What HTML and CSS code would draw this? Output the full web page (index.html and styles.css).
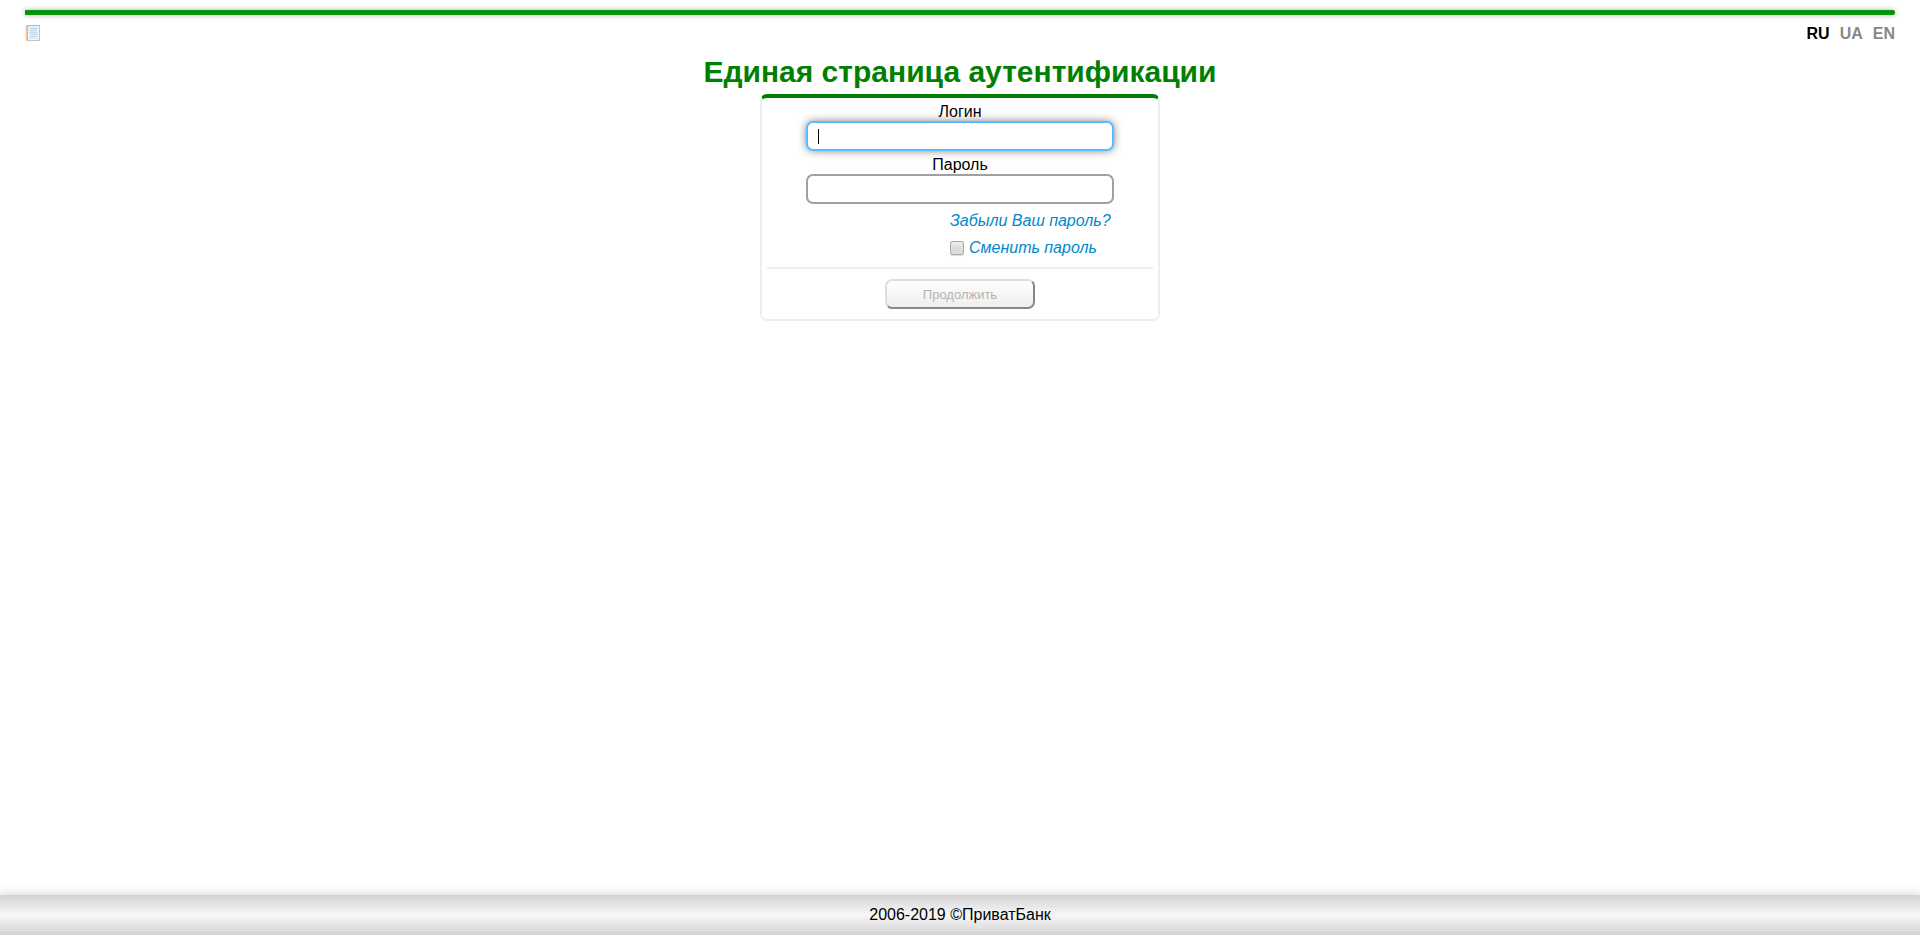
FILE: index.html
```html
<!DOCTYPE html>
<html lang="ru">
<head>
<meta charset="utf-8">
<title>Единая страница аутентификации</title>
<link rel="stylesheet" href="styles.css">
</head>
<body>
<header class="header">
  <div class="stripe"></div>
  <div class="toolbar">
    <a class="manual" href="#" aria-label="Инструкция">
      <svg width="16" height="16" viewBox="0 0 16 16" aria-hidden="true">
        <rect x="1" y="0" width="14" height="16" rx="1" fill="#dfb9a0"/>
        <rect x="2" y="0" width="13" height="1" fill="#d8ae8c"/>
        <rect x="2" y="15" width="13" height="1" fill="#d5bfb4"/>
        <rect x="1" y="1" width="2" height="14" fill="#e9b08f"/>
        <path d="M0 2.500h2M0 4.500h2M0 6.500h2M0 8.500h2M0 10.500h2M0 12.500h2" stroke="#f5d8c8"/>
        <rect x="3" y="1" width="11" height="14" fill="#eef5fb"/>
        <rect x="4" y="2" width="9" height="12" fill="#dcecf8"/>
        <path d="M5 3.500h7M5 5.500h6M5 7.500h7M6 9.500h6M5 11.500h7" stroke="#c5d8ea"/>
      </svg>
    </a>
    <nav class="languages" aria-label="Язык">
      <a class="language language-active" href="#">RU</a>
      <a class="language" href="#">UA</a>
      <a class="language" href="#">EN</a>
    </nav>
  </div>
</header>
<main class="main">
  <h1 class="title">Единая страница аутентификации</h1>
  <form class="card">
    <label class="label" for="login">Логин</label>
    <input class="field field-current" id="login" type="text" autocomplete="off">
    <label class="label" for="password">Пароль</label>
    <input class="field" id="password" type="password">
    <div class="options">
      <a class="option" href="#">Забыли Ваш пароль?</a>
      <label class="option"><input class="check" type="checkbox">Сменить пароль</label>
    </div>
    <hr class="divider">
    <button class="submit" type="submit" disabled>Продолжить</button>
  </form>
</main>
<footer class="footer">2006-2019 ©ПриватБанк</footer>
</body>
</html>
```
FILE: styles.css
```css
* {
  box-sizing: border-box;
}

body {
  margin: 0;
  min-height: 100vh;
  display: flex;
  flex-direction: column;
  background: #fff;
  color: #000;
  font: 16px/18px "Liberation Sans", Arial, sans-serif;
}

.header {
  padding: 10px 25px 0;
}

.stripe {
  height: 5px;
  border-radius: 0 2px 2px 0;
  background: linear-gradient(#0a9b14, #009100 50%, #0a9b14);
  box-shadow: 0 0 5px #aaa;
}

.toolbar {
  display: flex;
  justify-content: space-between;
  padding-top: 10px;
}

.manual svg {
  display: block;
}

.languages {
  display: flex;
  gap: 10px;
}

.language {
  color: #888;
  font-weight: bold;
  text-decoration: none;
}

.language-active {
  color: #000;
}

.main {
  flex: 1;
  display: flex;
  flex-direction: column;
  align-items: center;
  padding-top: 11px;
}

.title {
  margin: 0 0 4px;
  color: #008000;
  font-size: 30px;
  line-height: 36px;
}

.card {
  width: 400px;
  display: flex;
  flex-direction: column;
  align-items: center;
  padding: 0 5px 10px;
  border: 2px solid #eee;
  border-top: 4px solid #008000;
  border-radius: 7px;
}

.label {
  padding-top: 4px;
  line-height: 19px;
}

.field {
  width: 308px;
  height: 30px;
  padding: 0 10px;
  border: 2px solid #a0a0a0;
  border-radius: 7px;
  outline: 0;
  background: #fff;
  font: inherit;
}

/* The first field looks active, with a resting caret */
.field-current {
  border-color: #5cbcff;
  background: linear-gradient(#000, #000) 10px 6px / 1px 15px no-repeat #fff;
  box-shadow: 0 0 8px #888;
}

.options {
  width: 308px;
  display: flex;
  flex-direction: column;
  align-items: flex-start;
  padding: 3px 0 6px 144px;
}

.option {
  display: flex;
  align-items: center;
  color: #08c;
  font-style: italic;
  line-height: 27px;
  text-decoration: none;
  white-space: nowrap;
}

.check {
  appearance: none;
  width: 14px;
  height: 14px;
  margin: 0 5px 0 0;
  border: 1px solid #aaa;
  border-radius: 2px;
  background: linear-gradient(#eee, #dcdcdc 50%);
  box-shadow: 0 1px 1px #ddd;
}

.check:checked {
  background: #08c;
}

.divider {
  width: 100%;
  height: 2px;
  margin: 0 0 10px;
  border: 0;
  background: #eee;
}

.submit {
  width: 150px;
  height: 30px;
  padding: 0;
  border: 2px solid;
  border-color: #ddd #888 #888 #ddd;
  border-radius: 7px;
  background: linear-gradient(#fff, #eee);
  color: #b2b2b2;
  font: 13px/15px "Liberation Sans", Arial, sans-serif;
}

.footer {
  height: 40px;
  line-height: 39px;
  text-align: center;
  background: linear-gradient(#d3d3d3, #f7f7f7 50%, #d3d3d3);
  box-shadow: 0 0 10px #ccc;
}
```
